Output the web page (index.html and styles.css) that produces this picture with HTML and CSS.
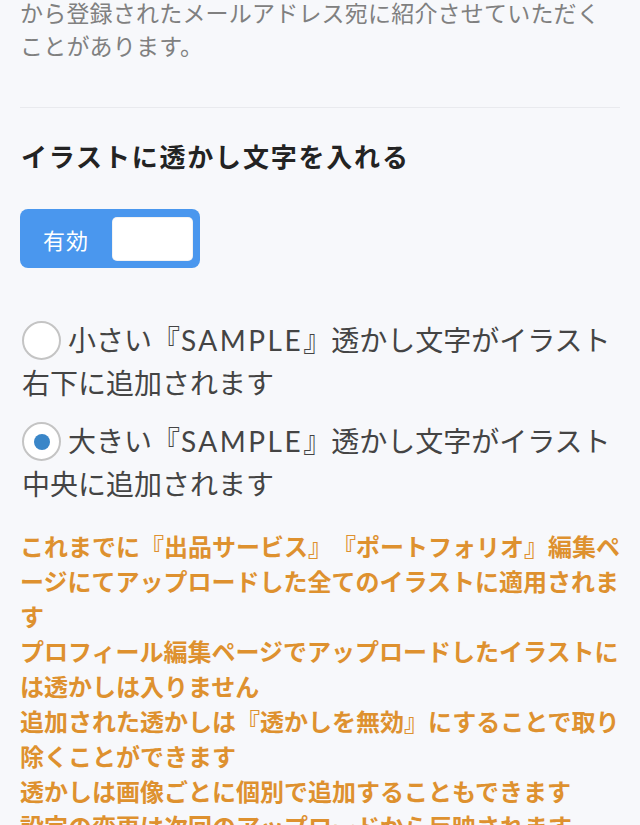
FILE: index.html
```html
<!DOCTYPE html>
<html lang="ja">
<head>
<meta charset="utf-8">
<link rel="stylesheet" href="styles.css">
</head>
<body>
<div class="page">
  <p class="intro">から登録されたメールアドレス宛に紹介させていただくことがあります。</p>
  <hr class="divider">
  <h2 class="heading">イラストに透かし文字を入れる</h2>
  <div class="toggle">
    <span class="toggle-label">有効</span>
    <span class="toggle-knob"></span>
  </div>
  <div class="options">
    <label class="option">
      <span class="radio"></span>小さい『<span class="latin">SAMPLE</span>』透かし文字がイラスト右下に追加されます
    </label>
    <label class="option">
      <span class="radio checked"></span>大きい『<span class="latin">SAMPLE</span>』透かし文字がイラスト中央に追加されます
    </label>
  </div>
  <div class="notes">
    <p class="note">これまでに『出品サービス』『ポートフォリオ』編集ページにてアップロードした全てのイラストに適用されます</p>
    <p class="note">プロフィール編集ページでアップロードしたイラストには透かしは入りません</p>
    <p class="note">追加された透かしは『透かしを無効』にすることで取り除くことができます</p>
    <p class="note">透かしは画像ごとに個別で追加することもできます</p>
    <p class="note">設定の変更は次回のアップロードから反映されます</p>
  </div>
</div>
</body>
</html>
```
FILE: styles.css
```css
html, body {
  margin: 0;
  padding: 0;
  background: #f7f8fb;
}
body {
  font-family: Lato, "Noto Sans CJK JP", sans-serif;
  overflow: hidden;
  height: 825px;
  text-spacing-trim: space-all;
}
.page {
  width: 600px;
  padding: 0 20px;
}
.intro {
  margin: -3px 0 0;
  font-size: 23px;
  letter-spacing: 0.2px;
  line-height: 33px;
  color: #808080;
}
.divider {
  margin: 44px 0 0;
  border: 0;
  border-top: 1.5px solid #e9eaee;
  height: 0;
}
.heading {
  margin: 33px 0 0 1px;
  font-size: 26px;
  letter-spacing: 1.8px;
  line-height: 32px;
  font-weight: 700;
  color: #232323;
}
.toggle {
  margin-top: 36px;
  width: 180px;
  height: 59px;
  box-sizing: border-box;
  border-radius: 8px;
  background: #4a97ee;
  display: flex;
  align-items: center;
  justify-content: space-between;
  padding: 0 7px 0 23px;
}
.toggle-label {
  color: #fff;
  font-size: 22px;
  letter-spacing: 1px;
}
.toggle-knob {
  width: 81px;
  height: 44px;
  background: #fff;
  border-radius: 5px;
  box-shadow: inset 0 0 0 1px rgba(0,0,0,0.05);
}
.options {
  margin-top: 51px;
  display: flex;
  flex-direction: column;
  gap: 15px;
}
.option {
  display: block;
  font-size: 28px;
  line-height: 43px;
  color: #444;
  padding-left: 2px;
}
.latin {
  letter-spacing: 2.5px;
  padding-left: 1px;
}
.radio {
  display: inline-block;
  box-sizing: border-box;
  width: 39px;
  height: 39px;
  border: 2px solid #c4c4c4;
  border-radius: 50%;
  background: #fff;
  vertical-align: -9px;
  margin-right: 7px;
  position: relative;
}
.radio.checked::after {
  content: "";
  position: absolute;
  left: 10px;
  top: 10px;
  width: 16px;
  height: 16px;
  border-radius: 50%;
  background: #3a86c8;
}
.notes {
  margin-top: 23px;
  width: 602px;
}
.note {
  margin: 0;
  font-size: 24px;
  line-height: 35px;
  font-weight: 700;
  color: #de912f;
  line-break: normal;
}
```
